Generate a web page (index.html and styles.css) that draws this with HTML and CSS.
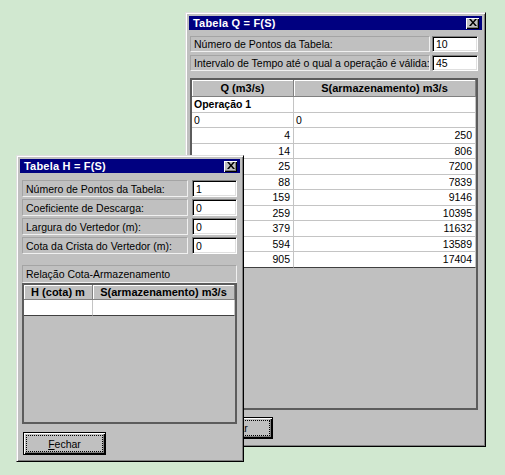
FILE: index.html
```html
<!DOCTYPE html>
<html lang="pt">
<head>
<meta charset="utf-8">
<title>Tabelas</title>
<link rel="stylesheet" href="styles.css">
</head>
<body>
<div class="win win-q">
  <div class="titlebar">
    <span class="title">Tabela Q = F(S)</span>
    <span class="close"><svg width="8" height="7" viewBox="0 0 8 7"><path d="M0 0h2l2 2.4 2-2.4h2l-3 3.5 3 3.5h-2l-2-2.4-2 2.4h-2l3-3.5z" fill="#000"/></svg></span>
  </div>
  <div class="body">
    <div class="fields">
      <div class="lbl">Número de Pontos da Tabela:</div><div class="inp">10</div>
      <div class="lbl">Intervalo de Tempo até o qual a operação é válida:</div><div class="inp">45</div>
    </div>
    <div class="grid">
      <div class="row hdr"><div class="cell">Q (m3/s)</div><div class="cell">S(armazenamento) m3/s</div></div>
      <div class="row data"><div class="cell op">Operação 1</div><div class="cell"></div></div>
      <div class="row data"><div class="cell">0</div><div class="cell">0</div></div>
      <div class="row data"><div class="cell num">4</div><div class="cell num">250</div></div>
      <div class="row data"><div class="cell num">14</div><div class="cell num">806</div></div>
      <div class="row data"><div class="cell num">25</div><div class="cell num">7200</div></div>
      <div class="row data"><div class="cell num">88</div><div class="cell num">7839</div></div>
      <div class="row data"><div class="cell num">159</div><div class="cell num">9146</div></div>
      <div class="row data"><div class="cell num">259</div><div class="cell num">10395</div></div>
      <div class="row data"><div class="cell num">379</div><div class="cell num">11632</div></div>
      <div class="row data"><div class="cell num">594</div><div class="cell num">13589</div></div>
      <div class="row data last"><div class="cell num">905</div><div class="cell num">17404</div></div>
    </div>
    <button class="btn"><u>F</u>echar</button>
  </div>
</div>

<div class="win win-h">
  <div class="titlebar">
    <span class="title">Tabela H = F(S)</span>
    <span class="close"><svg width="8" height="7" viewBox="0 0 8 7"><path d="M0 0h2l2 2.4 2-2.4h2l-3 3.5 3 3.5h-2l-2-2.4-2 2.4h-2l3-3.5z" fill="#000"/></svg></span>
  </div>
  <div class="body">
    <div class="fields">
      <div class="lbl">Número de Pontos da Tabela:</div><div class="inp">1</div>
      <div class="lbl">Coeficiente de Descarga:</div><div class="inp">0</div>
      <div class="lbl">Largura do Vertedor (m):</div><div class="inp">0</div>
      <div class="lbl">Cota da Crista do Vertedor (m):</div><div class="inp">0</div>
    </div>
    <div class="caption">Relação Cota-Armazenamento</div>
    <div class="grid">
      <div class="row hdr"><div class="cell">H (cota) m</div><div class="cell">S(armazenamento) m3/s</div></div>
      <div class="row data last"><div class="cell"></div><div class="cell"></div></div>
    </div>
    <button class="btn"><u>F</u>echar</button>
  </div>
</div>
</body>
</html>
```

FILE: styles.css
```css
html, body {
  margin: 0;
  padding: 0;
}
body {
  width: 505px;
  height: 475px;
  background: #d1e8d0;
  position: relative;
  overflow: hidden;
  font-family: "Liberation Sans", Arial, sans-serif;
  color: #000;
}

.win {
  position: absolute;
  box-sizing: border-box;
  background: #c0c0c0;
  border: 1px solid;
  border-color: #dfdfdf #000 #000 #dfdfdf;
  box-shadow: inset 1px 1px #fff, inset -1px -1px #808080;
  padding: 3px;
  display: flex;
  flex-direction: column;
}
.win-q { left: 185px; top: 12px; width: 301px; height: 435px; }
.win-h { left: 16px; top: 155px; width: 228px; height: 307px; }

.titlebar {
  height: 14px;
  flex: none;
  background: #000080;
  color: #fff;
  font-weight: bold;
  font-size: 11px;
  display: flex;
  align-items: center;
  justify-content: space-between;
  padding: 0 3px 0 4px;
}
.title { line-height: 14px; letter-spacing: 0.2px; }
.close {
  width: 13px;
  height: 11px;
  box-sizing: border-box;
  background: #c0c0c0;
  box-shadow: inset 1px 1px #fff, inset -1px -1px #000, inset -2px -2px #808080;
  display: flex;
  align-items: center;
  justify-content: center;
  padding-bottom: 1px;
}
.close svg { display: block; }

.body {
  display: flex;
  flex-direction: column;
}
.win-q .body { padding: 6px 4px 0 1px; }
.win-h .body { padding: 7px 3px 0 2px; }

.fields {
  display: grid;
  grid-template-columns: 1fr 46px;
  column-gap: 2px;
  row-gap: 3px;
  grid-auto-rows: 16px;
}
.win-h .fields {
  grid-template-columns: 1fr 45px;
  column-gap: 4px;
  row-gap: 2px;
  grid-auto-rows: 17px;
}

.lbl, .caption {
  box-sizing: border-box;
  border: 1px solid;
  border-color: #a4a4a4 #f0f0f0 #f0f0f0 #a4a4a4;
  padding-left: 3px;
  font-size: 10.5px;
  display: flex;
  align-items: center;
  white-space: nowrap;
  overflow: hidden;
}
.caption {
  margin-top: 11px;
  height: 18px;
}

.inp {
  box-sizing: border-box;
  background: #fff;
  border: 1px solid;
  border-color: #808080 #fff #fff #808080;
  box-shadow: inset 1px 1px #000, inset -1px -1px #dfdfdf;
  padding-left: 3px;
  font-size: 10.5px;
  display: flex;
  align-items: center;
}

.grid {
  box-sizing: border-box;
  border: 2px solid #5c5c5c;
  background: #c0c0c0;
  overflow: hidden;
  flex: none;
}
.win-q .grid { margin-top: 7px; height: 332px; }
.win-h .grid { height: 141px; }

.row {
  display: grid;
  grid-template-columns: 102px 1fr;
}
.win-h .row { grid-template-columns: 69px 1fr; }

.cell {
  box-sizing: border-box;
  white-space: nowrap;
  overflow: hidden;
}
.hdr .cell {
  height: 17px;
  line-height: 16px;
  font-size: 11px;
  font-weight: bold;
  text-align: center;
  background: #c0c0c0;
  border-right: 1px solid #808080;
  border-bottom: 1px solid #808080;
  box-shadow: inset 1px 1px #fff;
}
.win-h .hdr .cell { height: 15px; line-height: 14px; }

.data .cell {
  height: 15.5px;
  line-height: 14px;
  font-size: 10.5px;
  background: #fff;
  border-right: 1px solid #c4c4c4;
  border-bottom: 1px solid #c4c4c4;
  padding: 0 3px 0 2px;
}
.win-h .data .cell { height: 16px; }
.data.last .cell { border-bottom-color: #404040; }
.num { text-align: right; }
.op {
  font-weight: bold;
  font-size: 12px;
}

.btn {
  margin-top: 7px;
  width: 83px;
  height: 22px;
  padding: 0;
  background: #c0c0c0;
  border: 1px solid #000;
  box-shadow: inset 1px 1px #fff, inset -1px -1px #000, inset -2px -2px #808080;
  font-family: "Liberation Sans", Arial, sans-serif;
  font-size: 10.5px;
  color: #000;
  outline: 1px dotted #000;
  outline-offset: -4px;
  flex: none;
}
.win-h .btn { margin-top: 8px; height: 23px; margin-left: 1px; }
```
